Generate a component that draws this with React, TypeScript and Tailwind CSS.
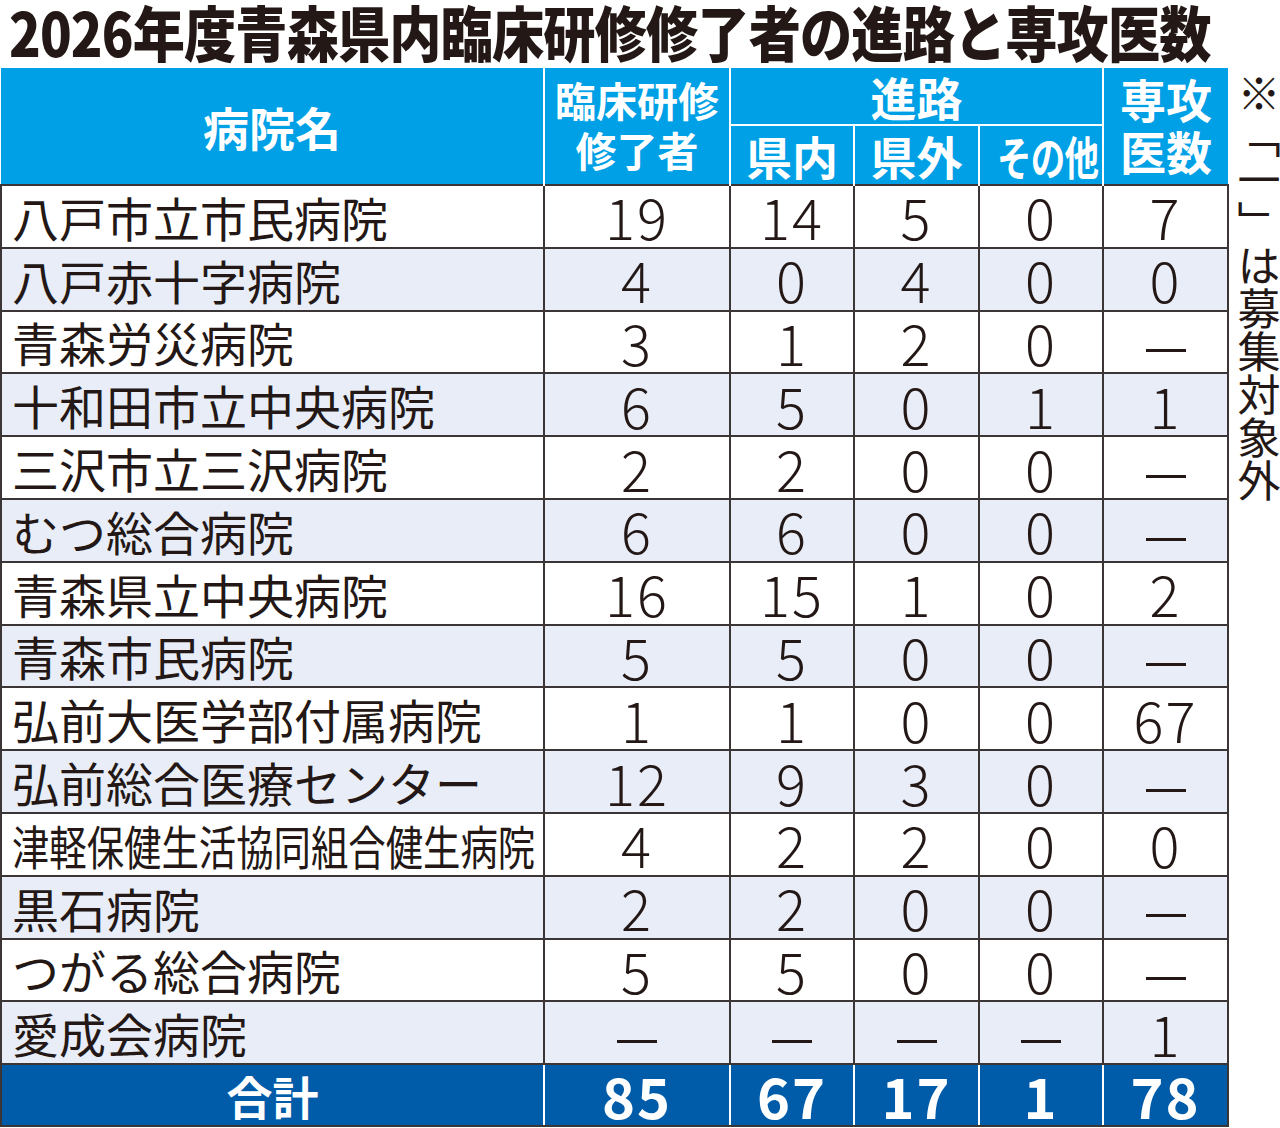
import React from "react";

type Row = { name: string; v: string[] };

const rows: Row[] = [
  { name: "八戸市立市民病院", v: ["19", "14", "5", "0", "7"] },
  { name: "八戸赤十字病院", v: ["4", "0", "4", "0", "0"] },
  { name: "青森労災病院", v: ["3", "1", "2", "0", "—"] },
  { name: "十和田市立中央病院", v: ["6", "5", "0", "1", "1"] },
  { name: "三沢市立三沢病院", v: ["2", "2", "0", "0", "—"] },
  { name: "むつ総合病院", v: ["6", "6", "0", "0", "—"] },
  { name: "青森県立中央病院", v: ["16", "15", "1", "0", "2"] },
  { name: "青森市民病院", v: ["5", "5", "0", "0", "—"] },
  { name: "弘前大医学部付属病院", v: ["1", "1", "0", "0", "67"] },
  { name: "弘前総合医療センター", v: ["12", "9", "3", "0", "—"] },
  { name: "津軽保健生活協同組合健生病院", v: ["4", "2", "2", "0", "0"] },
  { name: "黒石病院", v: ["2", "2", "0", "0", "—"] },
  { name: "つがる総合病院", v: ["5", "5", "0", "0", "—"] },
  { name: "愛成会病院", v: ["—", "—", "—", "—", "1"] },
];

const totals = ["85", "67", "17", "1", "78"];

function Num({ t }: { t: string }) {
  if (t === "—") {
    return <span className="inline-block w-[40px] h-[3px] bg-[#231815] align-middle" />;
  }
  return <span className="inline-block tracking-[2px]">{t}</span>;
}

export default function App() {
  return (
    <div className="w-[1280px] h-[1128px] bg-white overflow-hidden text-[#231815] font-['Noto_Sans_CJK_JP',sans-serif]">
      <div className="h-[68px] pl-[9px] overflow-hidden whitespace-nowrap">
        <span className="inline-block origin-left scale-x-[0.87] text-[60px] leading-[62px] font-black tracking-[-1px] text-[#231815]">
          2026年度青森県内臨床研修修了者の進路と専攻医数
        </span>
      </div>
      <div className="flex">
        <table className="table-fixed border-collapse w-[1227px]">
          <colgroup>
            <col className="w-[543px]" />
            <col className="w-[186px]" />
            <col className="w-[124px]" />
            <col className="w-[125px]" />
            <col className="w-[124px]" />
            <col className="w-[125px]" />
          </colgroup>
          <thead>
            <tr className="h-[57px] bg-[#00a0e6] text-white">
              <th rowSpan={2} className="border-r-2 border-white font-bold text-[46px] leading-none text-center">
                病院名
              </th>
              <th rowSpan={2} className="border-r-2 border-white font-bold text-[41px] leading-[50px] text-center">
                <div className="-mt-[4px]">
                  臨床研修
                  <br />
                  修了者
                </div>
              </th>
              <th colSpan={3} className="border-r-2 border-b-2 border-white font-bold text-[46px] leading-none text-center">
                進路
              </th>
              <th rowSpan={2} className="font-bold text-[46px] leading-[52px] text-center">
                <div className="-mt-[4px]">
                  専攻
                  <br />
                  医数
                </div>
              </th>
            </tr>
            <tr className="h-[60px] bg-[#00a0e6] text-white">
              <th className="border-r-2 border-white font-bold text-[46px] leading-none text-center">県内</th>
              <th className="border-r-2 border-white font-bold text-[46px] leading-none text-center">県外</th>
              <th className="border-r-2 border-white font-bold text-[46px] leading-none text-center whitespace-nowrap">
                <span className="inline-block scale-x-[0.75] tracking-[-1px]">その他</span>
              </th>
            </tr>
          </thead>
          <tbody>
            {rows.map((r, i) => (
              <tr key={r.name} className={i % 2 === 1 ? "h-[62.8px] bg-[#e8edf8]" : "h-[62.8px] bg-white"}>
                <td className="border-2 border-[#3b3536] pl-[10px] text-[47px] leading-none whitespace-nowrap overflow-visible font-normal">
                  <span className={r.name.length > 12 ? "inline-block origin-left scale-x-[0.795]" : "inline-block"}>
                    {r.name}
                  </span>
                </td>
                {r.v.map((v, j) => (
                  <td key={j} className="border-2 border-[#3b3536] text-center text-[56px] leading-none font-light">
                    <Num t={v} />
                  </td>
                ))}
              </tr>
            ))}
            <tr className="h-[62px] bg-[#005ca9] text-white">
              <td className="border-2 border-t-[#3b3536] border-b-[#3b3536] border-l-[#3b3536] border-r-white text-center text-[46px] font-bold leading-none">
                合計
              </td>
              {totals.map((t, j) => (
                <td
                  key={j}
                  className={
                    j === 4
                      ? "border-2 border-t-[#3b3536] border-b-[#3b3536] border-r-[#3b3536] border-l-white text-center text-[56px] font-bold leading-none"
                      : "border-2 border-t-[#3b3536] border-b-[#3b3536] border-x-white text-center text-[56px] font-bold leading-none"
                  }
                >
                  <span className="inline-block tracking-[2px]">{t}</span>
                </td>
              ))}
            </tr>
          </tbody>
        </table>
        <div className="pl-[8px] pt-[4px]">
          <div className="[writing-mode:vertical-rl] text-[43px] leading-[44px] font-normal">
            ※「一」は募集対象外
          </div>
        </div>
      </div>
    </div>
  );
}
